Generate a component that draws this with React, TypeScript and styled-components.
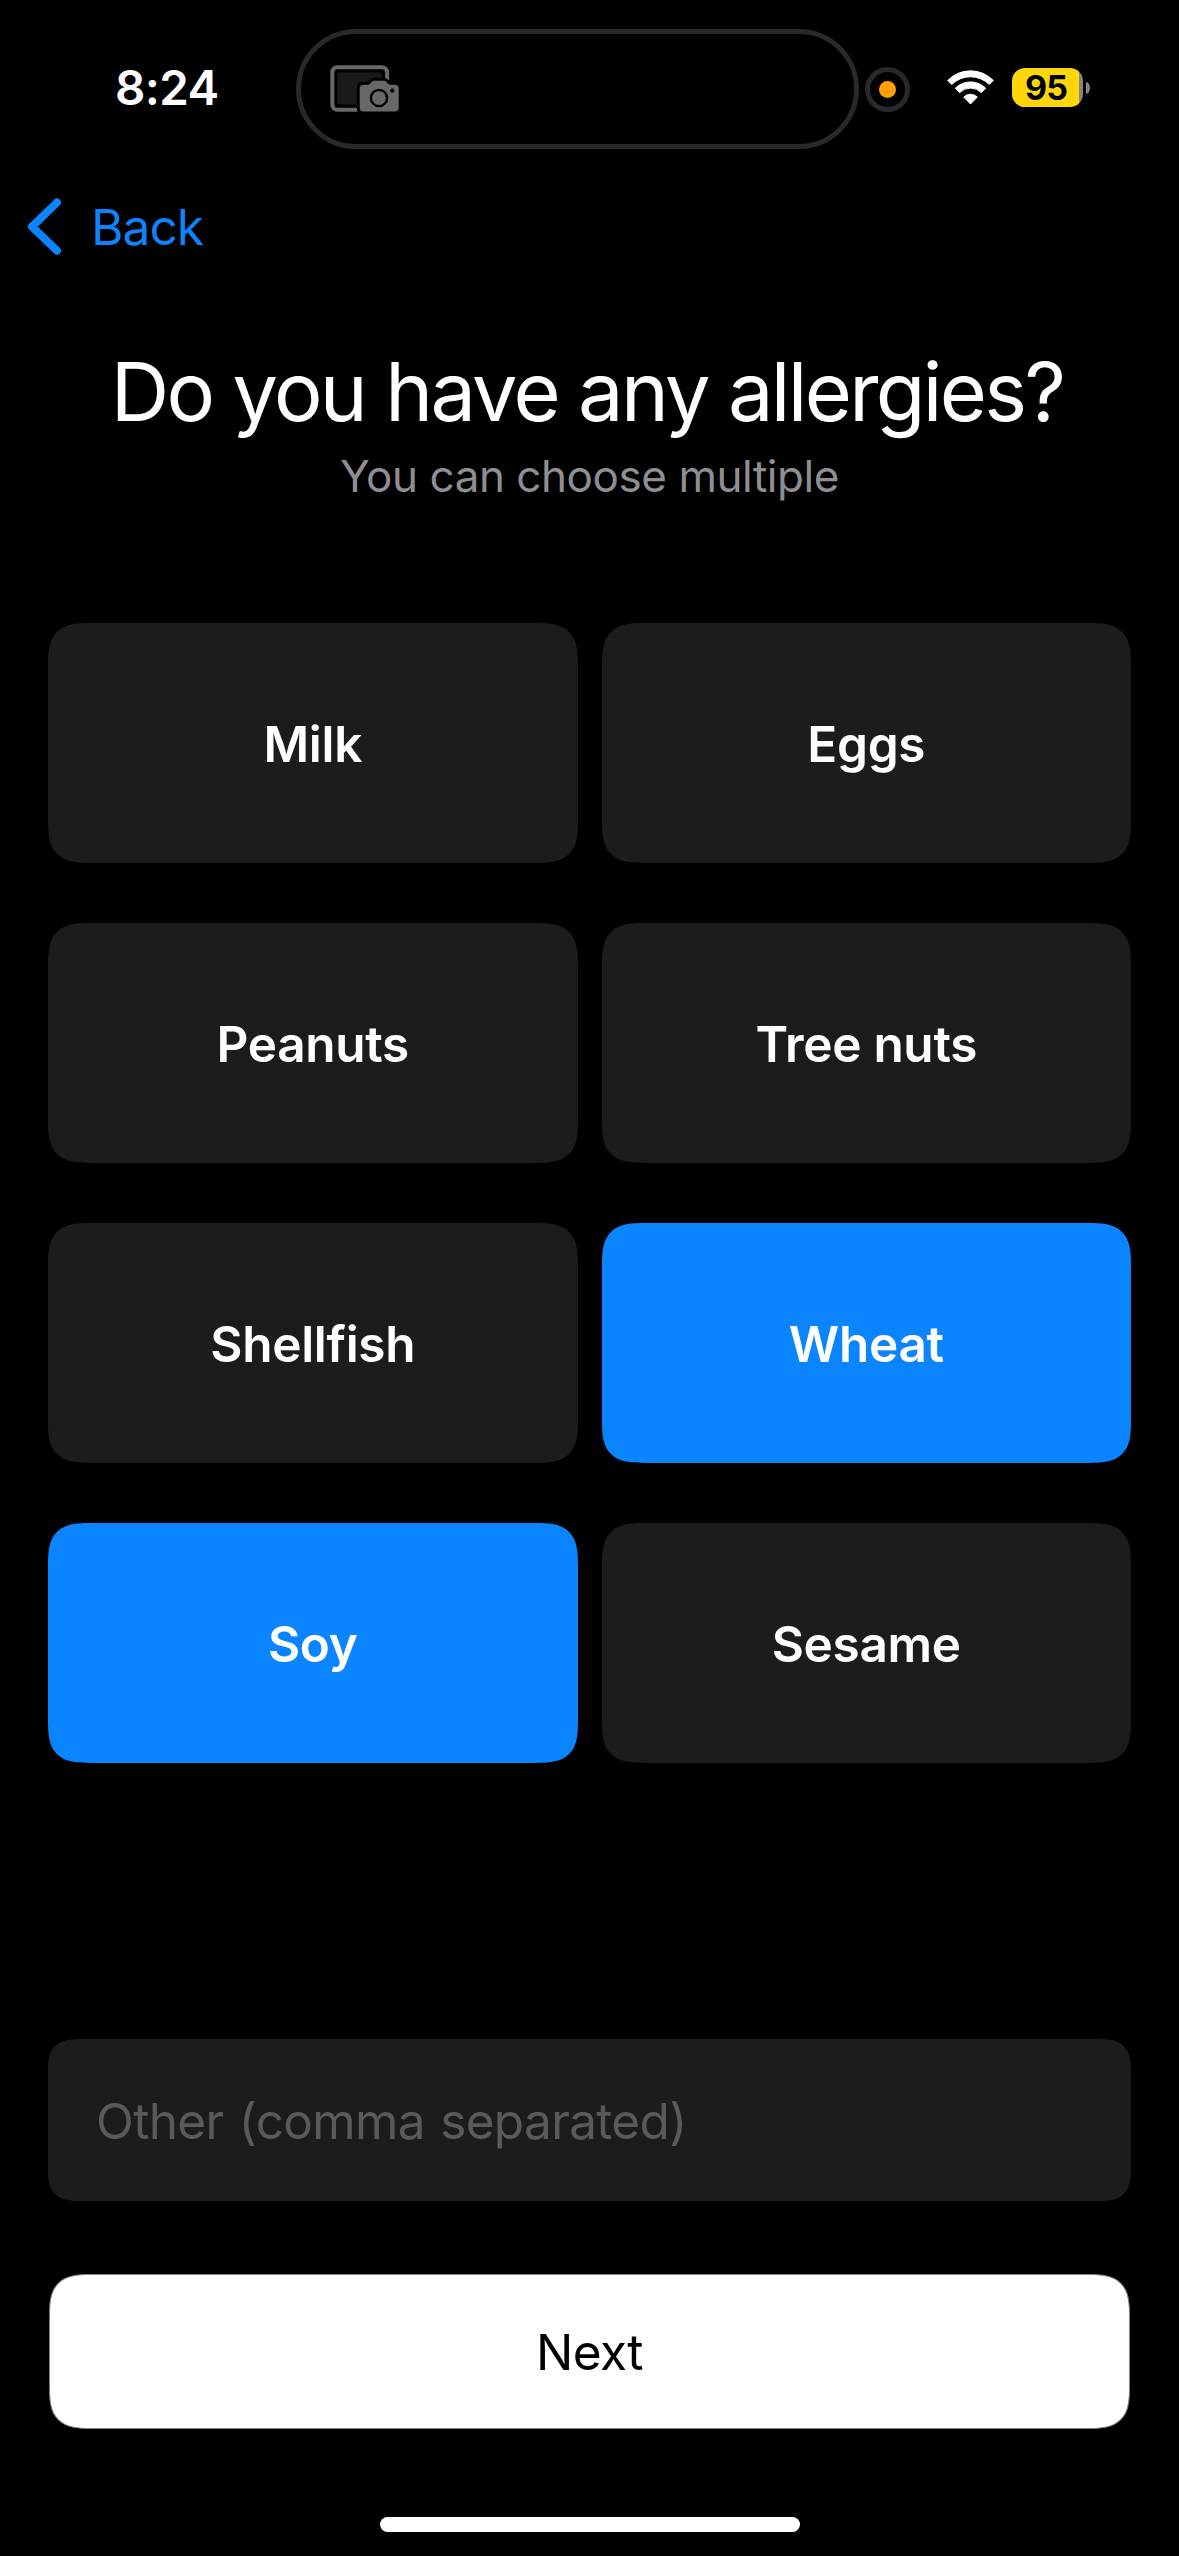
import { useState } from 'react';
import styled, { createGlobalStyle, css } from 'styled-components';

const colors = {
    background: '#000000',
    card: '#1c1c1e',
    accent: '#0a84ff',
    text: '#ffffff',
    secondary: '#8e8e93',
    placeholder: '#5a5a5e',
    outline: '#292929',
};

// continuous corners where the browser knows them, plain radius elsewhere
const smoothCorners = (radius: number) => css`
    border-radius: ${radius}px;

    @supports (corner-shape: superellipse(1.6)) {
        border-radius: ${radius * 1.45}px;
        corner-shape: superellipse(1.6);
    }
`;

const GlobalStyle = createGlobalStyle`
    * {
        box-sizing: border-box;
    }

    body {
        margin: 0;
        background: ${colors.background};
        color: ${colors.text};
        font-family: Inter, 'Liberation Sans', sans-serif;
    }

    button, input {
        margin: 0;
        padding: 0;
        border: none;
        outline: none;
        font-family: inherit;
    }
`;

const Screen = styled.div`
    display: flex;
    flex-direction: column;
    width: 1179px;
    height: 2556px;
    overflow: hidden;
    background: ${colors.background};
`;

const StatusBar = styled.div`
    display: flex;
    align-items: center;
    height: 149px;
    padding-top: 29px;
`;

const Time = styled.div`
    width: 296px;
    padding: 0 0 2px 115px;
    font-size: 47.5px;
    font-weight: 600;
    line-height: 60px;
    letter-spacing: -0.6px;
`;

const Island = styled.div`
    display: flex;
    align-items: center;
    width: 563px;
    height: 120px;
    padding-left: 29px;
    border: 5px solid ${colors.outline};
    border-radius: 60px;
`;

const RecordingRing = styled.div`
    display: flex;
    align-items: center;
    justify-content: center;
    width: 45px;
    height: 45px;
    margin-left: 6px;
    border: 5px solid ${colors.outline};
    border-radius: 50%;
`;

const RecordingDot = styled.div`
    width: 17px;
    height: 17px;
    border-radius: 50%;
    background: #ff9f0a;
`;

const WifiIcon = styled.svg`
    margin: 0 18px 3px 37px;
`;

const Battery = styled.div`
    display: flex;
    align-items: center;
    justify-content: center;
    width: 71px;
    height: 39px;
    margin-bottom: 3px;
    padding-right: 3px;
    border-radius: 13px;
    background: linear-gradient(to right, #ffd60a 67px, #86868a 67px);
    color: #000000;
    font-size: 34px;
    font-weight: 700;
    line-height: 39px;
    letter-spacing: -0.8px;
`;

const BatteryCap = styled.div`
    width: 4px;
    height: 12px;
    margin: 0 0 3px 3px;
    border-radius: 0 4px 4px 0 / 0 6px 6px 0;
    background: #86868a;
`;

const NavBar = styled.nav`
    display: flex;
    align-items: center;
    height: 156px;
    padding-left: 27px;
`;

const BackButton = styled.button`
    display: flex;
    align-items: center;
    gap: 28px;
    background: none;
    color: ${colors.accent};
    font-size: 49.5px;
    line-height: 60px;
    letter-spacing: -0.9px;
`;

const Header = styled.header`
    display: flex;
    flex-direction: column;
    align-items: center;
    height: 318px;
    padding-top: 37px;
`;

const Title = styled.h1`
    margin: 0;
    padding-right: 5px;
    font-size: 81px;
    font-weight: 400;
    line-height: 100px;
    letter-spacing: -2.65px;
`;

const Subtitle = styled.p`
    margin: 4px 0 0;
    color: ${colors.secondary};
    font-size: 44px;
    line-height: 60px;
    letter-spacing: -0.45px;
`;

const OptionGrid = styled.div`
    display: grid;
    grid-template-columns: 1fr 1fr;
    grid-auto-rows: 240px;
    gap: 60px 24px;
    padding: 0 48px;
`;

const Option = styled.button<{ $selected: boolean }>`
    ${smoothCorners(30)}
    padding-top: 2px;
    background: ${({ $selected }) => ($selected ? colors.accent : colors.card)};
    color: ${colors.text};
    font-size: 49.5px;
    font-weight: 600;
    letter-spacing: -0.3px;
`;

const Footer = styled.div`
    display: flex;
    flex-direction: column;
    padding: 276px 48px 0;
`;

const OtherInput = styled.input`
    ${smoothCorners(24)}
    height: 162px;
    padding: 2px 48px 0;
    background: ${colors.card};
    color: ${colors.text};
    font-size: 49.5px;
    letter-spacing: -0.65px;
    word-spacing: 2px;

    &::placeholder {
        color: ${colors.placeholder};
        opacity: 1;
    }
`;

const NextButton = styled.button`
    ${smoothCorners(30)}
    height: 155px;
    margin: 73px 1px 0;
    border: 1px solid #808080;
    background: #ffffff;
    color: #000000;
    font-size: 49.5px;
    letter-spacing: -0.6px;
`;

const HomeIndicator = styled.div`
    width: 420px;
    height: 15px;
    margin: 88px auto 0;
    border-radius: 8px;
    background: #ffffff;
`;

function ScreenCaptureIcon() {
    return (
        <svg width="70" height="48" viewBox="0 0 70 48">
            <rect x="2.3" y="2.3" width="54.8" height="42.4" rx="5" fill="none" stroke="#686868" strokeWidth="4" />
            <rect x="7.4" y="7.4" width="44.4" height="32" rx="2" fill="#1a1a1a" />
            <path
                d="M33.7 19.7h4.6c1 0 1.6-.6 2.2-1.4l1-1.2c.8-1 1.6-1.4 2.8-1.4h9.4c1.2 0 2 .4 2.8 1.4l1 1.2c.6.8 1.2 1.4 2.2 1.4h5c2.6 0 4 1.4 4 4v18.7c0 2.6-1.4 4-4 4h-31c-2.6 0-4-1.4-4-4v-18.7c0-2.6 1.4-4 4-4z"
                fill="#686868"
                stroke="#000000"
                strokeWidth="6"
                paintOrder="stroke"
            />
            <circle cx="49" cy="33" r="8.1" fill="none" stroke="#000000" strokeWidth="2.4" />
            <circle cx="62.3" cy="25.7" r="2.1" fill="#000000" />
        </svg>
    );
}

function Wifi() {
    return (
        <WifiIcon width="47" height="35" viewBox="0 0 47 35" fill="#ffffff" stroke="#ffffff" strokeWidth="1" strokeLinejoin="round">
            <path d="M.7 10.4A32 32 0 0 1 46.3 10.4L42.3 14.4A27 27 0 0 0 4.7 14.4z" />
            <path d="M8.3 18.2A21.5 21.5 0 0 1 38.7 18.2L34.4 22.6A15.5 15.5 0 0 0 12.6 22.6z" />
            <path d="M16.7 27A9.8 9.8 0 0 1 30.3 27L23.5 34z" />
        </WifiIcon>
    );
}

function BackChevron() {
    return (
        <svg width="36" height="60" viewBox="0 0 36 60" fill="none">
            <path d="M30 5.5L5 29.7L30 53.7" stroke={colors.accent} strokeWidth="8" strokeLinecap="round" strokeLinejoin="round" />
        </svg>
    );
}

const ALLERGIES = ['Milk', 'Eggs', 'Peanuts', 'Tree nuts', 'Shellfish', 'Wheat', 'Soy', 'Sesame'];

function App() {
    const [selected, setSelected] = useState<string[]>(['Wheat', 'Soy']);
    const [other, setOther] = useState('');

    const toggle = (name: string) => {
        setSelected((current) =>
            current.includes(name) ? current.filter((item) => item !== name) : [...current, name]
        );
    };

    return (
        <Screen>
            <GlobalStyle />
            <StatusBar>
                <Time>8:24</Time>
                <Island>
                    <ScreenCaptureIcon />
                </Island>
                <RecordingRing>
                    <RecordingDot />
                </RecordingRing>
                <Wifi />
                <Battery>95</Battery>
                <BatteryCap />
            </StatusBar>
            <NavBar>
                <BackButton>
                    <BackChevron />
                    Back
                </BackButton>
            </NavBar>
            <Header>
                <Title>Do you have any allergies?</Title>
                <Subtitle>You can choose multiple</Subtitle>
            </Header>
            <OptionGrid>
                {ALLERGIES.map((name) => (
                    <Option key={name} $selected={selected.includes(name)} onClick={() => toggle(name)}>
                        {name}
                    </Option>
                ))}
            </OptionGrid>
            <Footer>
                <OtherInput
                    placeholder="Other (comma separated)"
                    value={other}
                    onChange={(e) => setOther(e.target.value)}
                />
                <NextButton>Next</NextButton>
            </Footer>
            <HomeIndicator />
        </Screen>
    );
}

export default App;
